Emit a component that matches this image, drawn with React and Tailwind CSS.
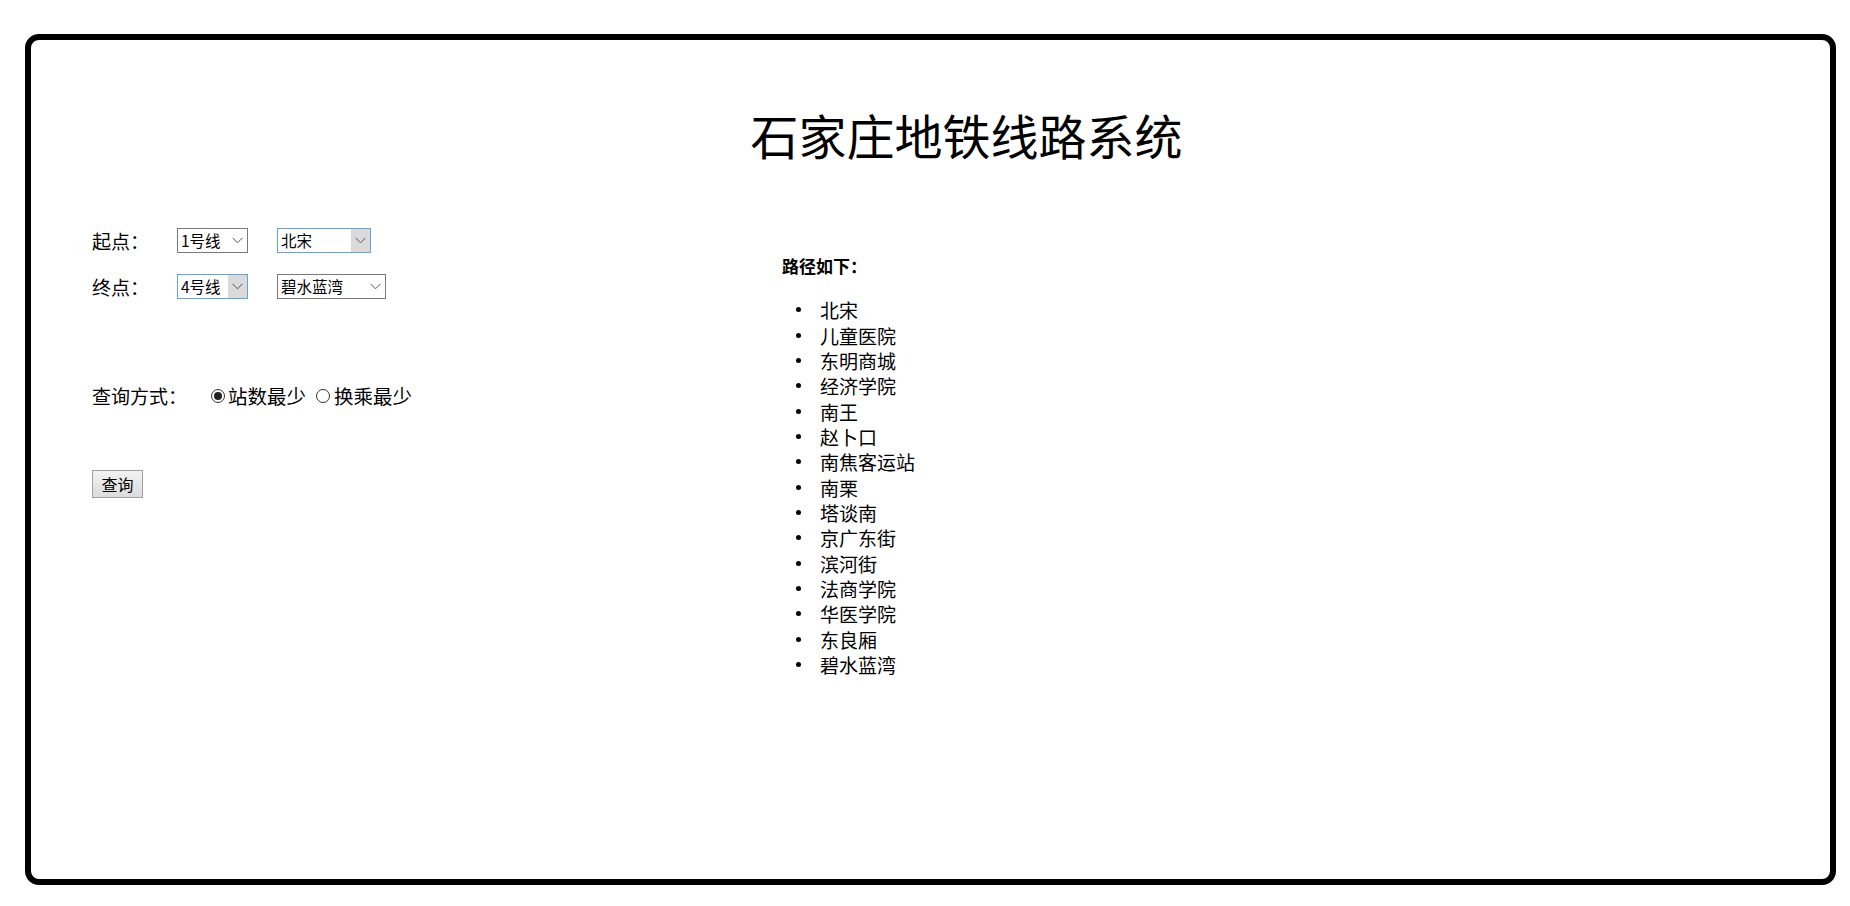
import React from "react";

const FONT = { fontFamily: '"Microsoft YaHei", "Noto Sans CJK SC", "Noto Sans", sans-serif' };

function Chevron() {
  return (
    <svg width="11" height="7" viewBox="0 0 11 7" className="block">
      <polyline points="0.5,0.8 5.5,5.8 10.5,0.8" fill="none" stroke="#555" strokeWidth="1" />
    </svg>
  );
}

function FakeSelect({ value, width, active }) {
  return (
    <div
      className={`flex h-[25px] items-stretch border bg-white ${active ? "border-[#5ea6e0]" : "border-[#7a7a7a]"}`}
      style={{ width }}
    >
      <div className="flex flex-1 items-center pl-[3px] text-[15.5px] leading-none text-black">{value}</div>
      <div className={`flex w-[19px] items-center justify-center ${active ? "bg-[#dadada]" : ""}`}>
        <Chevron />
      </div>
    </div>
  );
}

function Radio({ checked }) {
  return (
    <span className="flex h-[14px] w-[14px] items-center justify-center rounded-full border border-[#333] bg-white">
      {checked && <span className="h-[8px] w-[8px] rounded-full bg-[#222]" />}
    </span>
  );
}

const stations = [
  "北宋",
  "儿童医院",
  "东明商城",
  "经济学院",
  "南王",
  "赵卜口",
  "南焦客运站",
  "南栗",
  "塔谈南",
  "京广东街",
  "滨河街",
  "法商学院",
  "华医学院",
  "东良厢",
  "碧水蓝湾",
];

export default function App() {
  return (
    <div className="min-h-[906px] w-[1850px] bg-white text-black" style={FONT}>
      <div className="pt-[34px] pl-[25px]">
        <div className="h-[851px] w-[1811px] rounded-[14px] border-[6px] border-black">
          <div className="pt-[66px] pl-[72px] text-center text-[48px] leading-[56px]">石家庄地铁线路系统</div>
          <div className="flex pl-[61px]">
            <div className="w-[690px] pt-[66px]">
              <div className="flex h-[25px] items-center">
                <div className="w-[85px] text-[19px] leading-[25px]">起点：</div>
                <FakeSelect value="1号线" width={71} />
                <div className="w-[29px]" />
                <FakeSelect value="北宋" width={94} active />
              </div>
              <div className="mt-[21px] flex h-[25px] items-center">
                <div className="w-[85px] text-[19px] leading-[25px]">终点：</div>
                <FakeSelect value="4号线" width={71} active />
                <div className="w-[29px]" />
                <FakeSelect value="碧水蓝湾" width={109} />
              </div>
              <div className="mt-[84px] flex h-[25px] items-center text-[19.5px] leading-[25px]">
                <div className="w-[119px] text-[19px]">查询方式：</div>
                <Radio checked />
                <span className="ml-[3px]">站数最少</span>
                <span className="ml-[10px]" />
                <Radio />
                <span className="ml-[4px]">换乘最少</span>
              </div>
              <div className="mt-[62px]">
                <button className="h-[28px] w-[51px] border border-[#a0a0a0] bg-gradient-to-b from-[#f2f2f2] to-[#dcdcdc] text-[16px] leading-none text-black">
                  查询
                </button>
              </div>
            </div>
            <div className="flex-1 pt-[91px]">
              <div className="text-[17px] font-bold leading-[25px]">路径如下：</div>
              <ul className="mt-[19px]">
                {stations.map((s) => (
                  <li key={s} className="flex h-[25.36px] items-center text-[19px] leading-[25px]">
                    <span className="ml-[14px] h-[5px] w-[5px] rounded-full bg-black" />
                    <span className="ml-[19px]">{s}</span>
                  </li>
                ))}
              </ul>
            </div>
          </div>
        </div>
      </div>
    </div>
  );
}
